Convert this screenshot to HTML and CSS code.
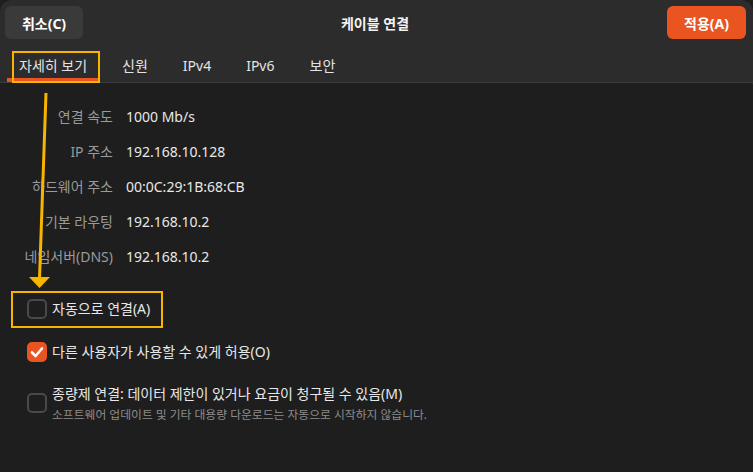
FILE: index.html
```html
<!DOCTYPE html>
<html lang="ko">
<head>
<meta charset="utf-8">
<title>케이블 연결</title>
<link rel="stylesheet" href="styles.css">
</head>
<body>
<div class="window">
  <div class="header">
    <div class="titlebar">
      <button class="btn btn-cancel">취소(C)</button>
      <div class="title">케이블 연결</div>
      <button class="btn btn-apply">적용(A)</button>
    </div>
    <div class="tabs">
      <div class="tab active">자세히 보기</div>
      <div class="tab">신원</div>
      <div class="tab">IPv4</div>
      <div class="tab">IPv6</div>
      <div class="tab">보안</div>
    </div>
  </div>

  <div class="content">
    <div class="info">
      <div class="label">연결 속도</div><div class="value">1000 Mb/s</div>
      <div class="label">IP 주소</div><div class="value">192.168.10.128</div>
      <div class="label">하드웨어 주소</div><div class="value">00:0C:29:1B:68:CB</div>
      <div class="label">기본 라우팅</div><div class="value">192.168.10.2</div>
      <div class="label">네임서버(DNS)</div><div class="value">192.168.10.2</div>
    </div>

    <div class="checks">
      <label class="check-row">
        <span class="checkbox"></span>
        <span class="check-text">자동으로 연결(A)</span>
      </label>
      <label class="check-row">
        <span class="checkbox checked">
          <svg viewBox="0 0 20 20" width="20" height="20"><path d="M5 10.5 L8.6 14 L15 6.5" fill="none" stroke="#fff" stroke-width="2.6" stroke-linecap="round" stroke-linejoin="round"/></svg>
        </span>
        <span class="check-text">다른 사용자가 사용할 수 있게 허용(O)</span>
      </label>
      <label class="check-row multi">
        <span class="checkbox"></span>
        <span class="check-text">
          <span class="check-title">종량제 연결: 데이터 제한이 있거나 요금이 청구될 수 있음(M)</span>
          <span class="check-sub">소프트웨어 업데이트 및 기타 대용량 다운로드는 자동으로 시작하지 않습니다.</span>
        </span>
      </label>
    </div>
  </div>

  <div class="anno anno-tab"></div>
  <div class="anno anno-check"></div>
  <svg class="anno-arrow" width="60" height="300" viewBox="0 0 60 300">
    <line x1="46" y1="93" x2="39.5" y2="279" stroke="#f7b500" stroke-width="3"/>
    <polygon points="29,277 50,277 39.5,288" fill="#f7b500"/>
  </svg>
</div>
</body>
</html>
```
FILE: styles.css
```css
* { box-sizing: border-box; }
html, body { margin: 0; padding: 0; }
body {
  background: #1e1e1e;
  font-family: "Noto Sans", "Noto Sans CJK KR", sans-serif;
  font-size: 14px;
  color: #e6e6e6;
  width: 753px;
  height: 472px;
  overflow: hidden;
}
.window {
  position: relative;
  width: 753px;
  height: 472px;
  background: #1e1e1e;
  border-radius: 12px 12px 0 0;
  overflow: hidden;
}
.header {
  background: #2c2c2c;
  height: 83px;
  border-bottom: 1px solid #3b3b3b;
  display: flex;
  flex-direction: column;
}
.titlebar {
  display: flex;
  align-items: center;
  justify-content: space-between;
  padding: 6px 7px 0 5px;
  height: 39px;
}
.btn {
  height: 33px;
  border: none;
  border-radius: 6px;
  font-family: inherit;
  font-size: 14px;
  font-weight: bold;
  color: #ffffff;
  cursor: pointer;
  padding: 0;
}
.btn-cancel { width: 78px; background: #3a3a3a; }
.btn-apply { width: 79px; background: #e95420; }
.title {
  font-weight: bold;
  font-size: 14px;
  color: #f2f2f2;
}
.tabs {
  display: flex;
  gap: 11px;
  padding-left: 7px;
  margin-top: auto;
}
.tab {
  padding: 0 12px;
  height: 34px;
  line-height: 36px;
  color: #e4e4e4;
  border-bottom: 4px solid transparent;
}
.tab.active { border-bottom-color: #e95420; }

.content { padding: 24px 0 0 0; }
.info {
  display: grid;
  grid-template-columns: 106px auto;
  column-gap: 13px;
  row-gap: 15px;
  padding-left: 7px;
  line-height: 20px;
}
.label { text-align: right; color: #9a9a9a; white-space: nowrap; }
.value { color: #e8e8e8; }

.checks {
  display: flex;
  flex-direction: column;
  padding-left: 27px;
  margin-top: 32px;
}
.check-row {
  display: flex;
  align-items: center;
  gap: 5px;
  line-height: 20px;
}
.check-row + .check-row { margin-top: 23px; }
.check-row.multi { align-items: flex-start; margin-top: 22px; }
.check-row.multi .checkbox { margin-top: 9px; }
.checkbox {
  width: 20px;
  height: 20px;
  flex: none;
  border: 2px solid #4a4a4a;
  border-radius: 5px;
  display: flex;
  align-items: center;
  justify-content: center;
}
.checkbox.checked {
  background: #e95420;
  border-color: #e95420;
}
.checkbox svg { display: block; flex: none; }
.check-text { color: #e8e8e8; display: flex; flex-direction: column; white-space: nowrap; }
.check-title { line-height: 20px; }
.check-sub { font-size: 11.8px; color: #8c8c8c; line-height: 20px; }

.anno {
  position: absolute;
  border: 2px solid #f7b500;
}
.anno-tab { left: 12px; top: 51px; width: 88px; height: 32px; }
.anno-check { left: 11px; top: 291px; width: 152px; height: 37px; }
.anno-arrow { position: absolute; left: 0; top: 0; }
```
